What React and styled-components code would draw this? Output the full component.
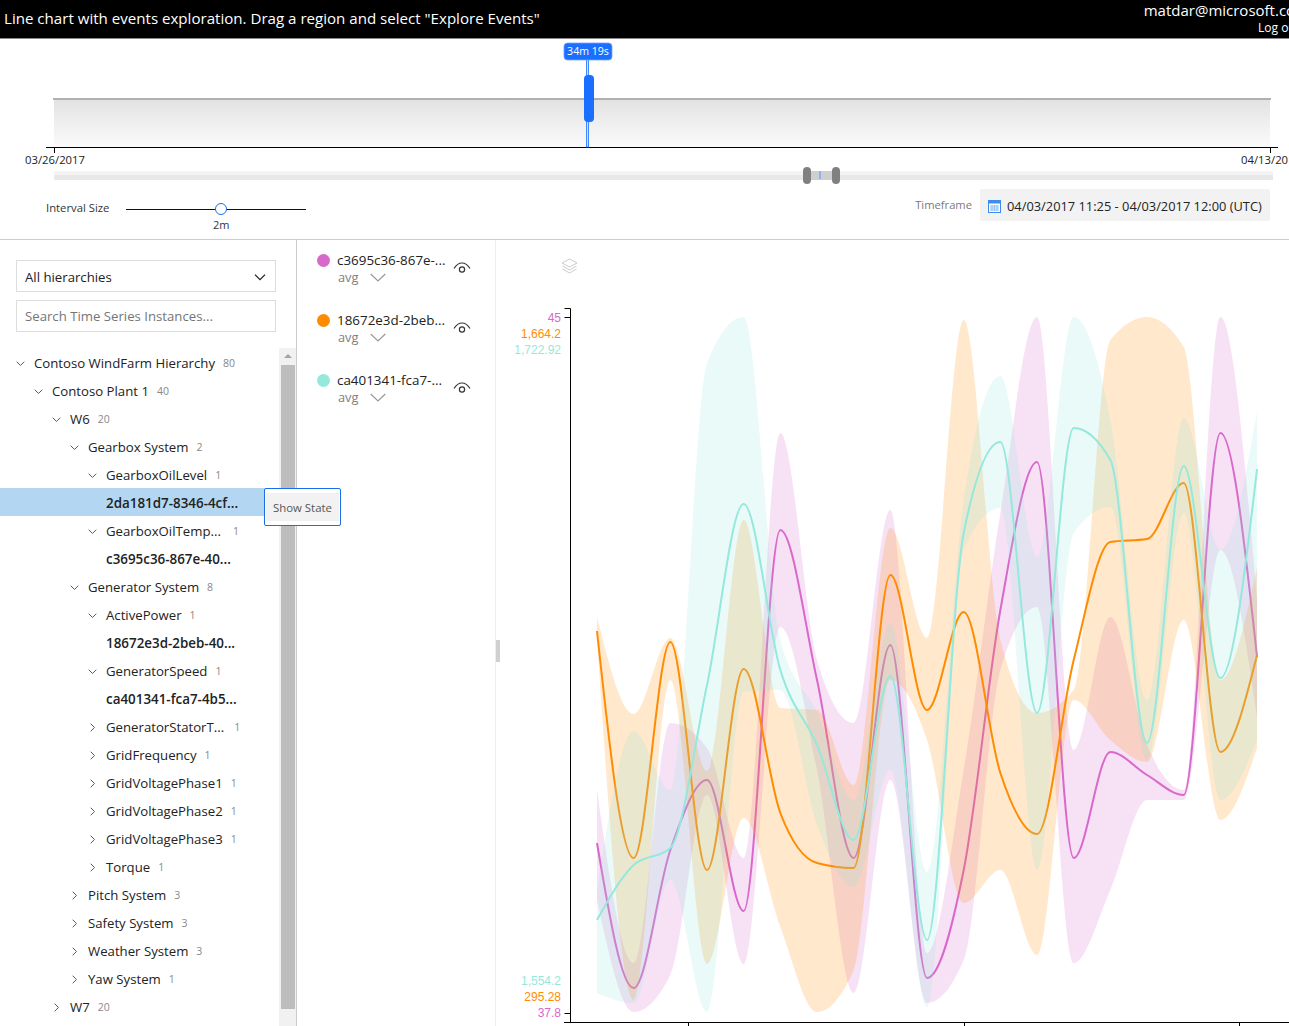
import React from 'react';
import styled, { createGlobalStyle } from 'styled-components';

const GlobalStyle = createGlobalStyle`
  html, body {
    margin: 0;
    padding: 0;
    height: 100%;
    overflow: hidden;
    background: #fff;
  }
  body {
    font-family: "Open Sans", "Noto Sans", sans-serif;
    color: #222;
  }
`;

const Page = styled.div`
  width: 1304px;
  height: 1026px;
  display: flex;
  flex-direction: column;
  overflow: hidden;
`;

const Header = styled.header`
  flex: 0 0 39px;
  box-sizing: border-box;
  display: flex;
  justify-content: space-between;
  background: #000;
  border-bottom: 1px solid #8a8a8a;
  color: #fff;
  padding-left: 4px;
`;

const Title = styled.div`
  font-size: 15.1px;
  line-height: 37px;
`;

const User = styled.div`
  display: flex;
  flex-direction: column;
  align-items: flex-end;
  padding-top: 1px;
`;

const UserName = styled.div`
  font-size: 15px;
  line-height: 19px;
  margin-right: -5px;
`;

const LogOut = styled.div`
  font-size: 12px;
  line-height: 15px;
  margin-right: 4px;
`;

const Availability = styled.section`
  flex: 0 0 201px;
  box-sizing: border-box;
  border-bottom: 1px solid #ccc;
  display: flex;
  flex-direction: column;
`;

const AvailabilityChart = styled.svg`
  display: block;
  flex: 0 0 128px;
`;

const RangeStrip = styled.div`
  position: relative;
  flex: 0 0 9px;
  margin: 4px 31px 0 54px;
  background: linear-gradient(#f4f4f4 0 50%, #e8e8e8 50% 100%);
`;

const RangeFill = styled.div`
  position: absolute;
  left: 757px;
  width: 21px;
  top: 0;
  bottom: 0;
  background: #cfcfcf;
`;

const RangeMark = styled.div`
  position: absolute;
  left: 765px;
  width: 2px;
  top: 0;
  bottom: 1px;
  background: #8db4e8;
`;

const RangeHandle = styled.div`
  position: absolute;
  left: ${p => p.$left}px;
  top: -4px;
  width: 8px;
  height: 17px;
  border-radius: 4px;
  background: #808080;
`;

const Controls = styled.div`
  flex: 1;
  display: flex;
  justify-content: space-between;
  padding: 9px 34px 0 46px;
`;

const IntervalGroup = styled.div`
  display: flex;
  gap: 16px;
`;

const IntervalLabel = styled.div`
  flex: 0 0 64px;
  font-size: 11.3px;
  line-height: 15px;
  padding-top: 11px;
  color: #333;
  white-space: nowrap;
`;

const Slider = styled.div`
  position: relative;
  width: 180px;
  height: 1px;
  margin-top: 20px;
  background: #111;
`;

const SliderThumb = styled.div`
  position: absolute;
  left: 89px;
  top: -6px;
  width: 10px;
  height: 10px;
  box-sizing: content-box;
  border: 1.5px solid #1a6fe8;
  border-radius: 50%;
  background: #fff;
`;

const SliderValue = styled.div`
  position: absolute;
  left: 87px;
  top: 9px;
  font-size: 11px;
  line-height: 14px;
  color: #333;
`;

const TimeframeGroup = styled.div`
  display: flex;
  gap: 8px;
  align-items: flex-start;
`;

const TimeframeLabel = styled.div`
  font-size: 11.2px;
  line-height: 32px;
  color: #7a7a7a;
`;

const TimeframeBox = styled.div`
  width: 290px;
  height: 32px;
  box-sizing: border-box;
  display: flex;
  align-items: center;
  gap: 6px;
  padding: 1px 0 0 8px;
  background: #f2f2f2;
  border-radius: 2px;
  font-size: 12.85px;
  color: #222;
  white-space: nowrap;
`;

const Main = styled.main`
  flex: 1;
  display: flex;
  min-height: 0;
`;

const LeftPanel = styled.aside`
  flex: 0 0 297px;
  box-sizing: border-box;
  border-right: 1px solid #ccc;
  display: flex;
  flex-direction: column;
  padding-top: 20px;
  min-height: 0;
`;

const SelectBox = styled.div`
  width: 260px;
  height: 32px;
  box-sizing: border-box;
  margin: 0 0 8px 16px;
  padding: 2px 9px 0 8px;
  border: 1px solid #ddd;
  display: flex;
  align-items: center;
  justify-content: space-between;
  font-size: 13.2px;
  color: #222;
`;

const SearchBox = styled.div`
  width: 260px;
  height: 32px;
  box-sizing: border-box;
  margin-left: 16px;
  padding-left: 8px;
  border: 1px solid #ddd;
  font-size: 13.2px;
  line-height: 30px;
  color: #757575;
`;

const TreeArea = styled.div`
  flex: 1;
  position: relative;
  display: flex;
  min-height: 0;
  margin-top: 16px;
`;

const Tree = styled.div`
  flex: 1;
  min-width: 0;
`;

const Row = styled.div`
  height: 28px;
  box-sizing: border-box;
  display: flex;
  align-items: center;
  padding: 2px 0 0 ${p => 16 + p.$level * 18}px;
  background: ${p => (p.$selected ? '#b3d7f2' : 'transparent')};
`;

const ChevronSlot = styled.span`
  flex: 0 0 18px;
  display: flex;
  align-items: center;
  color: #555;
`;

const RowLabel = styled.span`
  font-size: ${p => (p.$leaf ? 13.4 : 13.2)}px;
  font-weight: ${p => (p.$leaf ? 600 : 400)};
  color: #222;
  white-space: nowrap;
`;

const RowCount = styled.span`
  margin-left: ${p => p.$gap}px;
  font-size: 10.5px;
  color: #888;
`;

const Scrollbar = styled.div`
  flex: 0 0 17px;
  position: relative;
  background: #f1f1f1;
`;

const ScrollArrow = styled.div`
  position: absolute;
  left: 5px;
  top: 6px;
  border-left: 4px solid transparent;
  border-right: 4px solid transparent;
  border-bottom: 4px solid #a3a3a3;
`;

const ScrollThumb = styled.div`
  position: absolute;
  left: 2px;
  right: 1px;
  top: 17px;
  height: 644px;
  background: #bdbdbd;
`;

const Popover = styled.div`
  position: absolute;
  left: 264px;
  top: 140px;
  width: 77px;
  height: 38px;
  box-sizing: border-box;
  padding: 4px 1px;
  border: 1px solid #1a6fe8;
  border-radius: 2px;
  background: #fff;
  z-index: 2;
`;

const PopoverItem = styled.div`
  height: 28px;
  padding-left: 7px;
  background: #f2f2f2;
  font-size: 11.4px;
  line-height: 30px;
  color: #555;
  white-space: nowrap;
`;

const SeriesPanel = styled.section`
  flex: 0 0 199px;
  box-sizing: border-box;
  border-right: 1px solid #eee;
  padding: 10px 0 0 20px;
`;

const SeriesRow = styled.div`
  height: 60px;
  display: flex;
`;

const SeriesDot = styled.span`
  flex: 0 0 13px;
  height: 13px;
  margin-top: 4px;
  border-radius: 50%;
  background: ${p => p.$color};
`;

const SeriesBody = styled.div`
  flex: 0 0 116px;
  margin-left: 7px;
`;

const SeriesName = styled.div`
  font-size: 13.4px;
  line-height: 20px;
  color: #222;
  white-space: nowrap;
`;

const SeriesAggregate = styled.div`
  display: flex;
  align-items: center;
  gap: 12px;
  padding-left: 1px;
  font-size: 12.8px;
  line-height: 15px;
  color: #808080;
`;

const EyeButton = styled.span`
  margin-top: 7px;
  color: #333;
`;

const ChartPanel = styled.section`
  flex: 1;
  position: relative;
  min-width: 0;
`;

const ChartSvg = styled.svg`
  display: block;
`;

const LayersButton = styled.span`
  position: absolute;
  left: 65px;
  top: 17px;
  color: #ccc;
`;

const CollapseTab = styled.span`
  position: absolute;
  left: 0;
  top: 400px;
  width: 4px;
  height: 22px;
  background: #d0d0d0;
`;

const AxisText = styled.text`
  font-family: "Liberation Sans", Arial, sans-serif;
  font-size: 12px;
  text-anchor: end;
`;

const DateText = styled.text`
  font-family: "Open Sans", sans-serif;
  font-size: 11.3px;
  fill: #222;
  text-anchor: middle;
`;

const tree = [
  { level: 0, label: 'Contoso WindFarm Hierarchy', count: 80, state: 'open' },
  { level: 1, label: 'Contoso Plant 1', count: 40, state: 'open' },
  { level: 2, label: 'W6', count: 20, state: 'open' },
  { level: 3, label: 'Gearbox System', count: 2, state: 'open' },
  { level: 4, label: 'GearboxOilLevel', count: 1, state: 'open' },
  { level: 4, label: '2da181d7-8346-4cf...', state: 'leaf', selected: true },
  { level: 4, label: 'GearboxOilTemp...', count: 1, state: 'open', gap: 12 },
  { level: 4, label: 'c3695c36-867e-40...', state: 'leaf' },
  { level: 3, label: 'Generator System', count: 8, state: 'open' },
  { level: 4, label: 'ActivePower', count: 1, state: 'open' },
  { level: 4, label: '18672e3d-2beb-40...', state: 'leaf' },
  { level: 4, label: 'GeneratorSpeed', count: 1, state: 'open' },
  { level: 4, label: 'ca401341-fca7-4b5...', state: 'leaf' },
  { level: 4, label: 'GeneratorStatorT...', count: 1, state: 'closed', gap: 10 },
  { level: 4, label: 'GridFrequency', count: 1, state: 'closed' },
  { level: 4, label: 'GridVoltagePhase1', count: 1, state: 'closed' },
  { level: 4, label: 'GridVoltagePhase2', count: 1, state: 'closed' },
  { level: 4, label: 'GridVoltagePhase3', count: 1, state: 'closed' },
  { level: 4, label: 'Torque', count: 1, state: 'closed' },
  { level: 3, label: 'Pitch System', count: 3, state: 'closed' },
  { level: 3, label: 'Safety System', count: 3, state: 'closed' },
  { level: 3, label: 'Weather System', count: 3, state: 'closed' },
  { level: 3, label: 'Yaw System', count: 1, state: 'closed' },
  { level: 2, label: 'W7', count: 20, state: 'closed' },
];

const seriesList = [
  { name: 'c3695c36-867e-...', color: '#d869cb' },
  { name: '18672e3d-2beb...', color: '#ff8c00' },
  { name: 'ca401341-fca7-...', color: '#94e8dc' },
];

// values read off the picture, one per 36.67px step on the x axis
const chartSeries = [
  {
    color: '#d869cb',
    avg: [843, 988, 850, 780, 911, 530, 680, 858, 645, 978, 870, 610, 462, 858, 752, 775, 795, 433, 657],
    top: [790, 963, 723, 748, 858, 433, 660, 723, 510, 953, 770, 513, 317, 750, 617, 745, 790, 317, 600],
    bottom: [900, 1012, 975, 795, 964, 627, 770, 993, 780, 1003, 960, 670, 607, 963, 890, 800, 800, 550, 717],
  },
  {
    color: '#ff8c00',
    avg: [631, 858, 642, 870, 669, 813, 863, 868, 575, 710, 612, 773, 834, 660, 542, 539, 483, 752, 655],
    top: [617, 714, 638, 771, 520, 708, 710, 785, 528, 638, 320, 640, 713, 690, 340, 317, 347, 680, 567],
    bottom: [640, 1000, 680, 964, 818, 927, 1012, 970, 680, 740, 903, 870, 955, 700, 740, 762, 620, 820, 748],
  },
  {
    color: '#94e8dc',
    avg: [920, 865, 848, 685, 504, 670, 745, 840, 676, 940, 533, 442, 713, 428, 460, 743, 466, 678, 469],
    top: [893, 731, 790, 363, 317, 640, 712, 800, 623, 872, 500, 376, 557, 317, 420, 700, 418, 550, 412],
    bottom: [993, 1003, 880, 1012, 692, 690, 825, 887, 770, 1007, 550, 508, 870, 533, 507, 760, 513, 800, 740],
  },
];

const xStart = 597;
const xStep = 36.67;

// same tangents as a monotone-x curve
function tangents(ys) {
  const n = ys.length;
  const s = [];
  for (let i = 0; i < n - 1; i++) s.push((ys[i + 1] - ys[i]) / xStep);
  const m = new Array(n).fill(0);
  for (let i = 1; i < n - 1; i++) {
    const p = (s[i - 1] + s[i]) / 2;
    m[i] = (Math.sign(s[i - 1]) + Math.sign(s[i])) * Math.min(Math.abs(s[i - 1]), Math.abs(s[i]), 0.5 * Math.abs(p));
  }
  m[0] = (3 * s[0] - m[1]) / 2;
  m[n - 1] = (3 * s[n - 2] - m[n - 2]) / 2;
  return m;
}

function linePath(ys) {
  const m = tangents(ys);
  let d = `M${xStart},${ys[0]}`;
  for (let i = 0; i < ys.length - 1; i++) {
    const x0 = xStart + i * xStep;
    const x1 = x0 + xStep;
    d += `C${x0 + xStep / 3},${ys[i] + (m[i] * xStep) / 3} ${x1 - xStep / 3},${ys[i + 1] - (m[i + 1] * xStep) / 3} ${x1},${ys[i + 1]}`;
  }
  return d;
}

function areaPath(top, bottom) {
  const m = tangents(bottom);
  let d = linePath(top);
  d += `L${xStart + (bottom.length - 1) * xStep},${bottom[bottom.length - 1]}`;
  for (let i = bottom.length - 1; i > 0; i--) {
    const x1 = xStart + i * xStep;
    const x0 = x1 - xStep;
    d += `C${x1 - xStep / 3},${bottom[i] - (m[i] * xStep) / 3} ${x0 + xStep / 3},${bottom[i - 1] + (m[i - 1] * xStep) / 3} ${x0},${bottom[i - 1]}`;
  }
  return d + 'Z';
}

const ChevronDown = ({ size = 9 }) => (
  <svg width={size} height={size} viewBox="0 0 10 10" fill="none" stroke="currentColor" strokeWidth="1.1">
    <path d="M0.8 3 L5 7.2 L9.2 3" />
  </svg>
);

const ChevronRight = () => (
  <svg width="9" height="9" viewBox="0 0 10 10" fill="none" stroke="currentColor" strokeWidth="1.1">
    <path d="M3 0.8 L7.2 5 L3 9.2" />
  </svg>
);

const WideChevron = () => (
  <svg width="16" height="9" viewBox="0 0 16 9" fill="none" stroke="#999" strokeWidth="1.2">
    <path d="M0.7 1 L8 8 L15.3 1" />
  </svg>
);

const EyeIcon = () => (
  <svg width="18" height="12" viewBox="0 0 18 12" fill="none" stroke="currentColor" strokeWidth="1.2">
    <path d="M1 6.5 C3.5 2.5 6 1 9 1 C12 1 14.5 2.5 17 6.5" />
    <circle cx="9" cy="7.5" r="2.6" />
  </svg>
);

const LayersIcon = () => (
  <svg width="17" height="16" viewBox="0 0 17 16" fill="none" stroke="currentColor" strokeWidth="1">
    <path d="M8.5 1 L16 5 L8.5 9 L1 5 Z" />
    <path d="M1.5 8 L8.5 12 L15.5 8" />
    <path d="M1.5 11 L8.5 15 L15.5 11" />
  </svg>
);

const CalendarIcon = () => (
  <svg width="13" height="14" viewBox="0 0 13 14">
    <rect x="0.5" y="1.5" width="12" height="12" fill="#fff" stroke="#3f8cf0" />
    <rect x="0.5" y="1.5" width="12" height="3" fill="#3f8cf0" />
    <path d="M2 7 H11 M2 9 H11 M2 11 H11 M4 6 V12 M6.5 6 V12 M9 6 V12" stroke="#7fb2f2" strokeWidth="0.8" />
  </svg>
);

const TreeRow = ({ item }) => (
  <Row $level={item.level} $selected={item.selected}>
    <ChevronSlot>
      {item.state === 'open' && <ChevronDown />}
      {item.state === 'closed' && <ChevronRight />}
    </ChevronSlot>
    <RowLabel $leaf={item.state === 'leaf'}>{item.label}</RowLabel>
    {item.count !== undefined && <RowCount $gap={item.gap || 8}>{item.count}</RowCount>}
  </Row>
);

const Timeline = () => (
  <AvailabilityChart width="1304" height="128" viewBox="0 39 1304 128">
    <defs>
      <linearGradient id="availabilityFill" x1="0" y1="0" x2="0" y2="1">
        <stop offset="0" stopColor="#e2e2e2" />
        <stop offset="1" stopColor="#fbfbfb" />
      </linearGradient>
    </defs>
    <rect x="54" y="99" width="1216" height="48" fill="url(#availabilityFill)" />
    <rect x="53" y="98" width="1218" height="2" fill="#b0b0b0" />
    <rect x="46" y="147" width="1232" height="1" fill="#000" />
    <rect x="54" y="147" width="1" height="6" fill="#000" />
    <rect x="1270" y="147" width="1" height="6" fill="#000" />
    <DateText x="55" y="164">03/26/2017</DateText>
    <DateText x="1271" y="164">04/13/2017</DateText>
    <rect x="586.4" y="58" width="2.2" height="89" fill="#cfe0ff" stroke="#1a6fff" strokeWidth="0.8" />
    <rect x="564" y="43" width="48" height="17" rx="3.5" fill="#1a6fff" stroke="#6fa4ff" strokeWidth="0.8" />
    <text x="588" y="55" fill="#fff" fontSize="10.6" textAnchor="middle" fontFamily="Open Sans, sans-serif">34m 19s</text>
    <rect x="584" y="75" width="10" height="47" rx="4" fill="#1a6fff" />
  </AvailabilityChart>
);

const Chart = () => (
  <ChartSvg width="808" height="786" viewBox="496 240 808 786">
    {chartSeries.map(s => (
      <g key={s.color}>
        <path d={areaPath(s.top, s.bottom)} fill={s.color} fillOpacity="0.2" />
        <path d={linePath(s.avg)} fill="none" stroke={s.color} strokeWidth="2" />
      </g>
    ))}
    <path d="M564.5 308.5 H570.5 V1022.5 M564 1022.5 H1304 M564.5 317.5 H570.5 M564.5 1013.5 H570.5" fill="none" stroke="#000" />
    <path d="M688.5 1022 V1026 M964.5 1022 V1026 M1239.5 1022 V1026" fill="none" stroke="#000" />
    <AxisText x="561" y="322" fill="#d869cb">45</AxisText>
    <AxisText x="561" y="338" fill="#ff8c00">1,664.2</AxisText>
    <AxisText x="561" y="354" fill="#94e8dc">1,722.92</AxisText>
    <AxisText x="561" y="985" fill="#94e8dc">1,554.2</AxisText>
    <AxisText x="561" y="1001" fill="#ff8c00">295.28</AxisText>
    <AxisText x="561" y="1017" fill="#d869cb">37.8</AxisText>
  </ChartSvg>
);

export default function App() {
  return (
    <Page>
      <GlobalStyle />
      <Header>
        <Title>Line chart with events exploration. Drag a region and select "Explore Events"</Title>
        <User>
          <UserName>matdar@microsoft.com</UserName>
          <LogOut>Log out</LogOut>
        </User>
      </Header>
      <Availability>
        <Timeline />
        <RangeStrip>
          <RangeFill />
          <RangeMark />
          <RangeHandle $left={749} />
          <RangeHandle $left={778} />
        </RangeStrip>
        <Controls>
          <IntervalGroup>
            <IntervalLabel>Interval Size</IntervalLabel>
            <Slider>
              <SliderThumb />
              <SliderValue>2m</SliderValue>
            </Slider>
          </IntervalGroup>
          <TimeframeGroup>
            <TimeframeLabel>Timeframe</TimeframeLabel>
            <TimeframeBox>
              <CalendarIcon />
              04/03/2017 11:25 - 04/03/2017 12:00 (UTC)
            </TimeframeBox>
          </TimeframeGroup>
        </Controls>
      </Availability>
      <Main>
        <LeftPanel>
          <SelectBox>
            All hierarchies
            <ChevronDown size={12} />
          </SelectBox>
          <SearchBox>Search Time Series Instances...</SearchBox>
          <TreeArea>
            <Tree>
              {tree.map(item => (
                <TreeRow key={item.label} item={item} />
              ))}
            </Tree>
            <Scrollbar>
              <ScrollArrow />
              <ScrollThumb />
            </Scrollbar>
            <Popover>
              <PopoverItem>Show State</PopoverItem>
            </Popover>
          </TreeArea>
        </LeftPanel>
        <SeriesPanel>
          {seriesList.map(s => (
            <SeriesRow key={s.name}>
              <SeriesDot $color={s.color} />
              <SeriesBody>
                <SeriesName>{s.name}</SeriesName>
                <SeriesAggregate>
                  avg
                  <WideChevron />
                </SeriesAggregate>
              </SeriesBody>
              <EyeButton>
                <EyeIcon />
              </EyeButton>
            </SeriesRow>
          ))}
        </SeriesPanel>
        <ChartPanel>
          <Chart />
          <LayersButton>
            <LayersIcon />
          </LayersButton>
          <CollapseTab />
        </ChartPanel>
      </Main>
    </Page>
  );
}
